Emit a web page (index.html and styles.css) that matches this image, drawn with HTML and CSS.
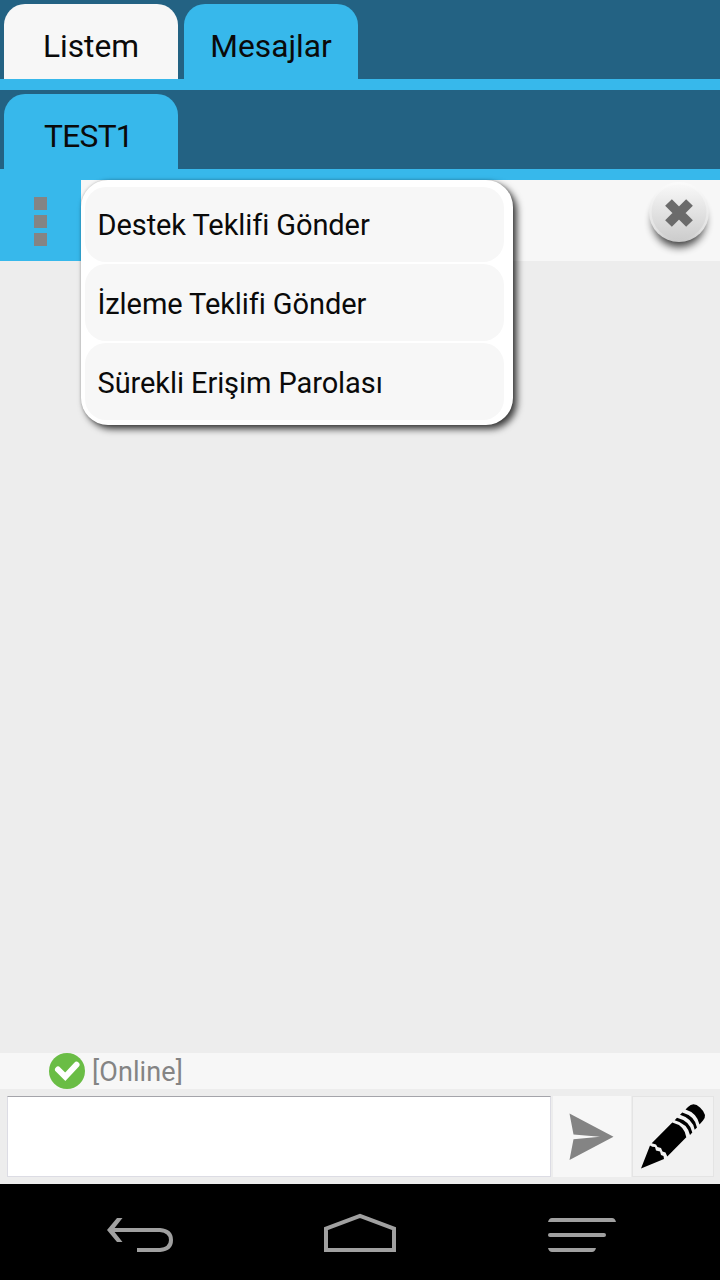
FILE: index.html
```html
<!DOCTYPE html>
<html lang="tr">
<head>
<meta charset="utf-8">
<title>Mesajlar</title>
<link rel="stylesheet" href="styles.css">
</head>
<body>
<div class="screen">
  <nav class="tabs">
    <div class="tab tab-light"><span>Listem</span></div>
    <div class="tab"><span>Mesajlar</span></div>
  </nav>
  <nav class="tabs">
    <div class="tab tab-session"><span>TEST1</span></div>
  </nav>
  <header class="toolbar">
    <div class="more"><i></i><i></i><i></i></div>
    <svg class="close" width="80" height="81" viewBox="640 180 80 81">
      <defs>
        <linearGradient id="face" x1="0" y1="0" x2="0" y2="1"><stop offset="0" stop-color="#f8f8f8"/><stop offset="1" stop-color="#cdcdcd"/></linearGradient>
        <linearGradient id="rim" x1="0" y1="0" x2="0" y2="1"><stop offset="0" stop-color="#fbfbfb"/><stop offset=".8" stop-color="#e2e2e2"/><stop offset="1" stop-color="#c8c8c8"/></linearGradient>
        <filter id="soft" x="-30%" y="-30%" width="160%" height="160%"><feGaussianBlur stdDeviation="4"/></filter>
      </defs>
      <circle cx="679" cy="221" r="26" fill="#000" opacity=".75" filter="url(#soft)"/>
      <circle cx="679" cy="212" r="30" fill="url(#rim)"/>
      <circle cx="679" cy="212" r="27.5" fill="url(#face)"/>
      <path d="M668.500 202.500L689.500 223.500M689.500 202.500L668.500 223.500" stroke="#6b6b6b" stroke-width="9.5"/>
    </svg>
    <div class="menu">
      <div class="item item-first"><span>Destek Teklifi Gönder</span></div>
      <div class="item"><span>İzleme Teklifi Gönder</span></div>
      <div class="item"><span>Sürekli Erişim Parolası</span></div>
    </div>
  </header>
  <main class="messages"></main>
  <div class="status">
    <svg width="36" height="36" viewBox="0 0 36 36"><circle cx="18" cy="18" r="18" fill="#6abd45"/><path d="M9 16.500L16.300 23.800L27.500 11.800" fill="none" stroke="#fff" stroke-width="6" stroke-linecap="round"/></svg>
    <span>[Online]</span>
  </div>
  <div class="compose">
    <div class="input"></div>
    <div class="send"><svg width="78" height="81" viewBox="553 1096 78 81"><path d="M569.5 1113.5L613.5 1136.8L569.5 1160L573.5 1139.2L600 1136.8L573.5 1134.5Z" fill="#848484"/></svg></div>
    <div class="edit"><svg width="82" height="81" viewBox="632 1096 82 81">
      <path d="M641 1168.500L650 1145.500Q652 1147 655 1147L656 1150.500L660 1151.500L661 1155L663.500 1156L664 1159Z"/>
      <path d="M651.700 1143.300L672.300 1122.500Q684.500 1125.500 686.300 1137.300L667.300 1156.500L665.500 1152.500L662.500 1151.500L661 1148L657.500 1147L656 1144.500Z"/>
      <path d="M674.700 1120.200L677 1117.800Q690 1121 692.300 1132.500L690 1135Q687.500 1123.500 674.700 1120.200Z"/>
      <path d="M680 1114.800L682.300 1112.500Q695 1116 697 1127.500L694.700 1129.800Q692.500 1118.500 680 1114.800Z"/>
      <path d="M685.500 1109.500L688 1107Q693.500 1101.500 700 1107.500Q708 1115 703 1120.500L699.500 1124.500Q697 1113 685.500 1109.500Z"/>
    </svg></div>
  </div>
  <footer class="navbar">
    <svg width="720" height="96" viewBox="0 1184 720 96" fill="none" stroke="#a0a0a0" stroke-width="4">
      <path d="M111 1230H160Q171 1231 171 1240Q171 1249 160 1250H137"/>
      <path d="M122.500 1218H117L107 1230L117 1242H122.500L113 1230Z" fill="#a0a0a0" stroke="none"/>
      <path d="M326 1250V1228.700L360 1216L394 1228.700V1250Z"/>
      <g fill="#a0a0a0" stroke="none"><path d="M548 1222Q549 1218 552 1218H612Q615 1218 616 1222Z"/><rect x="548" y="1233" width="58" height="4" rx="2"/><path d="M548 1248H596Q595 1252 592 1252H552Q549 1252 548 1248Z"/></g>
    </svg>
  </footer>
</div>
</body>
</html>
```
FILE: styles.css
```css
* { box-sizing: border-box; }
body { margin: 0; font-family: Roboto, "Noto Sans", sans-serif; color: #0a0a0a; }
svg { display: block; }
.screen { width: 720px; height: 1280px; display: flex; flex-direction: column; background: #ededed; overflow: hidden; }
.tabs { height: 90px; flex: none; display: flex; gap: 6px; padding: 4px 4px 0; background: #236283; border-bottom: 11px solid #37b8eb; }
.tab { width: 174px; height: 75px; display: flex; align-items: center; justify-content: center; padding-top: 9px; border-radius: 21px 21px 0 0; background: #37b8eb; font-size: 31.7px; white-space: nowrap; }
.tab-light { background: #f7f7f7; }
.tab-session { padding-right: 5px; letter-spacing: -0.7px; }
.toolbar { position: relative; height: 81px; flex: none; display: flex; justify-content: space-between; background: #f7f7f7; }
.more { width: 81px; display: flex; flex-direction: column; align-items: center; gap: 5px; padding: 17px 0 0; background: #37b8eb; }
.more i { width: 13px; height: 13px; background: #848484; }
.menu { position: absolute; left: 81px; top: 0; width: 432px; height: 245px; display: flex; flex-direction: column; gap: 2px; padding: 7px 9px 5px 4px; border-radius: 27px; background: #fff; box-shadow: 4px 4px 7px rgba(0, 0, 0, .75), 0 0 3px rgba(0, 0, 0, .2); }
.item { flex: 1; display: flex; align-items: center; padding: 2px 0 0 12.5px; border-radius: 21px; background: #f7f7f7; font-size: 29px; letter-spacing: -0.08px; white-space: nowrap; }
.item-first { padding-top: 0; }
.messages { flex: 1; }
.status { height: 36px; flex: none; display: flex; align-items: center; gap: 7px; padding-left: 49px; background: #f7f7f7; color: #848484; font-size: 27px; letter-spacing: 0.1px; }
.status span { padding-top: 2px; }
.compose { height: 95px; flex: none; display: flex; padding: 7px 6px 7px 7px; }
.input { width: 544px; margin-right: 2px; border: 1px solid #dcdce4; border-top-color: #a4a4aa; background: #fff; }
.send { width: 78px; margin-right: 1px; background: #f7f7f7; }
.edit { width: 82px; background: #f2f2f2; box-shadow: inset 0 0 0 1px #e4e4e4; }
.navbar { height: 96px; flex: none; background: #000; }
```
